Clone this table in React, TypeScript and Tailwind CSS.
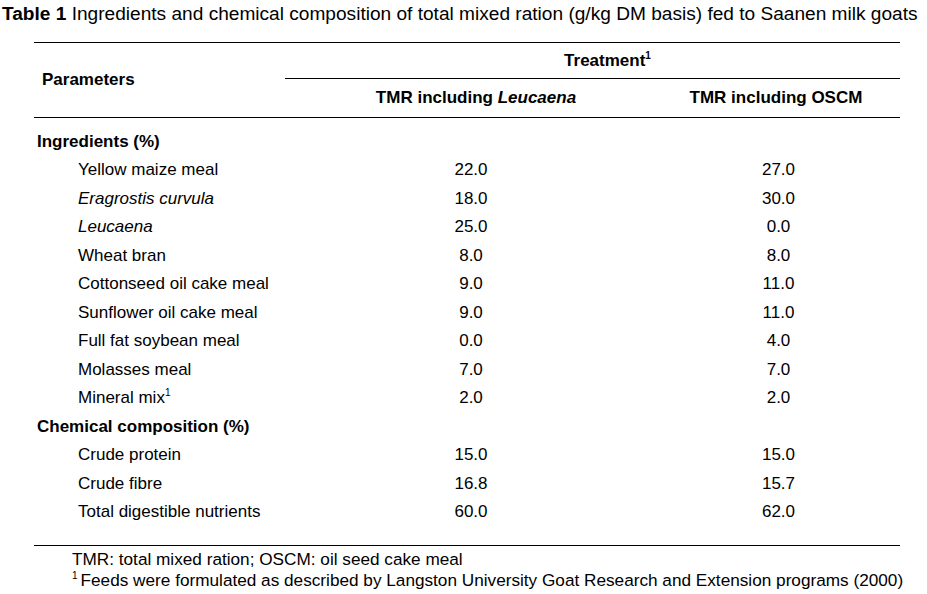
const ingredients: { name: string; italic?: boolean; sup?: boolean; a: string; b: string }[] = [
  { name: "Yellow maize meal", a: "22.0", b: "27.0" },
  { name: "Eragrostis curvula", italic: true, a: "18.0", b: "30.0" },
  { name: "Leucaena", italic: true, a: "25.0", b: "0.0" },
  { name: "Wheat bran", a: "8.0", b: "8.0" },
  { name: "Cottonseed oil cake meal", a: "9.0", b: "11.0" },
  { name: "Sunflower oil cake meal", a: "9.0", b: "11.0" },
  { name: "Full fat soybean meal", a: "0.0", b: "4.0" },
  { name: "Molasses meal", a: "7.0", b: "7.0" },
  { name: "Mineral mix", sup: true, a: "2.0", b: "2.0" },
];

const chemical = [
  { name: "Crude protein", a: "15.0", b: "15.0" },
  { name: "Crude fibre", a: "16.8", b: "15.7" },
  { name: "Total digestible nutrients", a: "60.0", b: "62.0" },
];

function Sup() {
  return <span className="relative top-[-7px] text-[10px] leading-none">1</span>;
}

function Row({ name, italic, sup, a, b }: { name: string; italic?: boolean; sup?: boolean; a: string; b: string }) {
  return (
    <div className="grid grid-cols-[251px_322px_293px] h-[28.5px] items-center">
      <div className="pl-[44px]">
        <span className={italic ? "italic" : ""}>{name}</span>
        {sup && <Sup />}
      </div>
      <div className="pl-[50px] text-center">{a}</div>
      <div className="pl-[50px] text-center">{b}</div>
    </div>
  );
}

function Section({ title }: { title: string }) {
  return (
    <div className="h-[28.5px] flex items-center pl-[3px] font-bold">{title}</div>
  );
}

export default function App() {
  return (
    <div className="w-[927px] h-[594px] bg-white text-black font-['Liberation_Sans',Arial,sans-serif] text-[17px] leading-[20px] overflow-hidden">
      <div className="pt-[3px] pl-[2px] whitespace-nowrap text-[19.1px] leading-[22px]">
        <span className="font-bold">Table 1</span> Ingredients and chemical composition of total mixed ration (g/kg DM basis) fed to Saanen milk goats
      </div>

      <div className="ml-[34px] w-[866px] mt-[17px]">
        {/* Header */}
        <div className="border-t border-black grid grid-cols-[251px_615px]">
          <div className="flex items-center pl-[8px] font-bold">Parameters</div>
          <div>
            <div className="h-[36px] flex items-center justify-center font-bold border-b border-black">
              <span className="pl-[30px]">
                Treatment<Sup />
              </span>
            </div>
            <div className="grid grid-cols-[322px_293px] h-[38px] items-center font-bold">
              <div className="pl-[60px] text-center">
                TMR including <span className="italic">Leucaena</span>
              </div>
              <div className="pl-[45px] text-center">TMR including OSCM</div>
            </div>
          </div>
        </div>

        <div className="border-t border-black pt-[9.5px] pb-[18px]">
          <Section title="Ingredients (%)" />
          {ingredients.map((r) => (
            <Row key={r.name} {...r} />
          ))}
          <Section title="Chemical composition (%)" />
          {chemical.map((r) => (
            <Row key={r.name} {...r} />
          ))}
        </div>

        <div className="border-t border-black" />
      </div>

      <div className="pl-[72px] pt-[3px] text-[17.2px] leading-[21px]">
        <div>TMR: total mixed ration; OSCM: oil seed cake meal</div>
        <div className="whitespace-nowrap">
          <Sup />
          <span className="ml-[3px]">Feeds were formulated as described by Langston University Goat Research and Extension programs (2000)</span>
        </div>
      </div>
    </div>
  );
}
